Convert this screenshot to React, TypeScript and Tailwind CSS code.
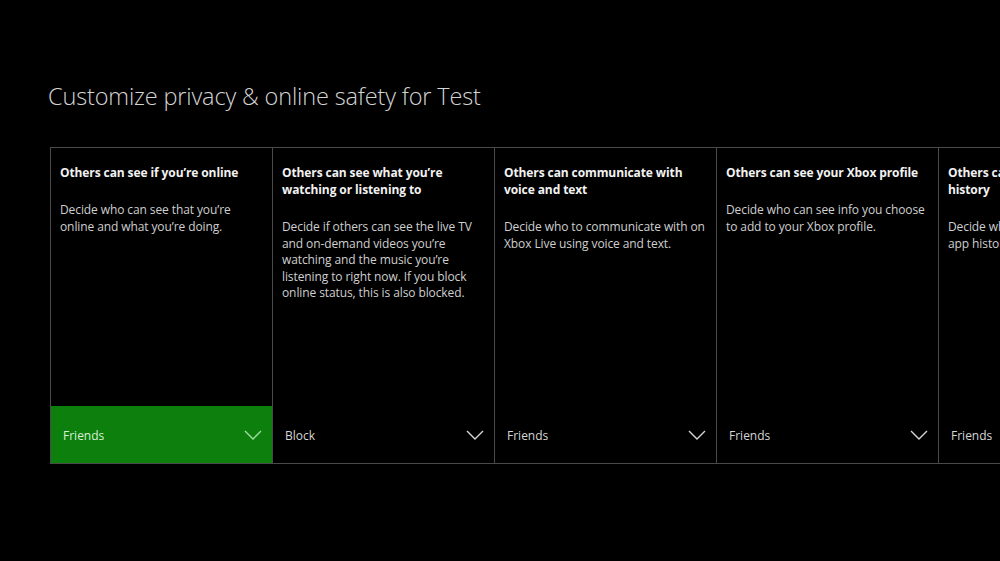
interface Setting {
  title: string;
  description: string;
  value: string;
  active?: boolean;
}

const settings: Setting[] = [
  {
    title: "Others can see if you\u2019re online",
    description: "Decide who can see that you\u2019re online and what you\u2019re doing.",
    value: "Friends",
    active: true,
  },
  {
    title: "Others can see what you\u2019re watching or listening to",
    description:
      "Decide if others can see the live TV and on-demand videos you\u2019re watching and the music you\u2019re listening to right now. If you block online status, this is also blocked.",
    value: "Block",
  },
  {
    title: "Others can communicate with voice and text",
    description: "Decide who to communicate with on Xbox Live using voice and text.",
    value: "Friends",
  },
  {
    title: "Others can see your Xbox profile",
    description: "Decide who can see info you choose to add to your Xbox profile.",
    value: "Friends",
  },
  // last column runs off the screen, lines are fixed so they break like the console does
  {
    title: "Others can see your game and app\nhistory",
    description: "Decide who can see your game and\napp history.",
    value: "Friends",
  },
];

function Chevron({ className }: { className: string }) {
  return (
    <svg viewBox="0 0 18 10" className={className} fill="none" stroke="currentColor" strokeWidth={1.4}>
      <polyline points="1,1 9,9 17,1" />
    </svg>
  );
}

function SettingColumn({ setting }: { setting: Setting }) {
  const fixedLines = setting.title.includes("\n");
  return (
    <div className="w-[222px] shrink-0 flex flex-col border-l border-[#4a4a4a]">
      <div className="flex-1 px-[9px] pt-[16px]">
        <h3
          className={
            fixedLines
              ? "text-[12px] leading-[17px] font-bold text-[#f2f2f2] tracking-[-0.1px] whitespace-pre"
              : "text-[12px] leading-[17px] font-bold text-[#f2f2f2] tracking-[-0.1px]"
          }
        >
          {setting.title}
        </h3>
        <p
          className={
            fixedLines
              ? "mt-[21px] text-[12px] leading-[16.5px] text-[#cfcfcf] tracking-[-0.1px] whitespace-pre"
              : "mt-[21px] text-[12px] leading-[16.5px] text-[#cfcfcf] tracking-[-0.1px]"
          }
        >
          {setting.description}
        </p>
      </div>
      <button
        className={
          setting.active
            ? "h-[57px] flex items-center justify-between pl-[12px] pr-[10px] bg-[#0c7f0c] text-[#d8f0d8]"
            : "h-[57px] flex items-center justify-between pl-[12px] pr-[10px] text-[#d6d6d6]"
        }
      >
        <span className="text-[12px] pt-[2px]">{setting.value}</span>
        <Chevron
          className={setting.active ? "w-[18px] h-[10px] text-[#9fdc9f]" : "w-[18px] h-[10px] text-[#d6d6d6]"}
        />
      </button>
    </div>
  );
}

export default function App() {
  return (
    <div
      className="w-[1000px] h-[561px] bg-black overflow-hidden"
      style={{ fontFamily: '"Open Sans", "Noto Sans", sans-serif' }}
    >
      <h1 className="pl-[48px] pt-[80px] text-[23.5px] leading-[32px] font-light text-[#d4d4d4] tracking-[-0.15px]">
        Customize privacy &amp; online safety for Test
      </h1>
      <div className="ml-[50px] mt-[35px] h-[317px] flex border-t border-b border-[#4a4a4a]">
        {settings.map((s, i) => (
          <SettingColumn key={i} setting={s} />
        ))}
      </div>
    </div>
  );
}
